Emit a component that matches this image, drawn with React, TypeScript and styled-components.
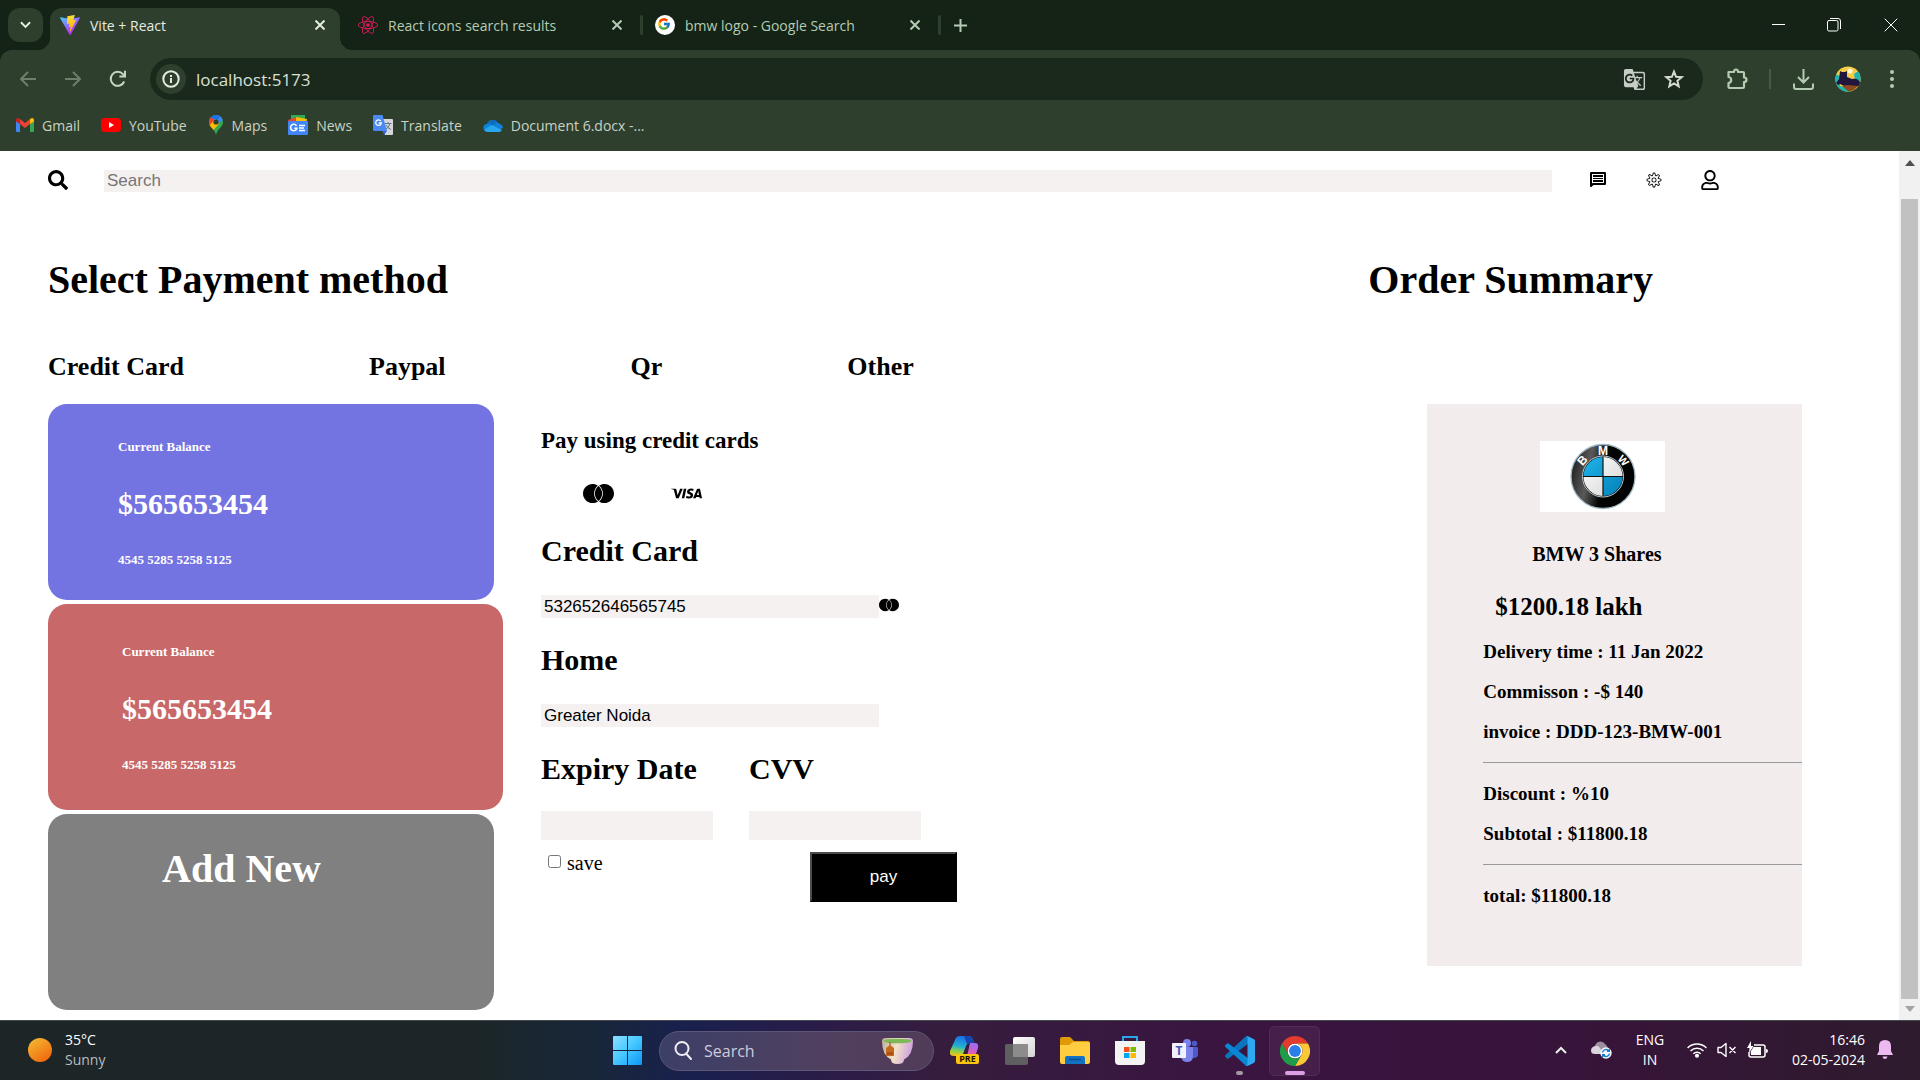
import React from "react";
import styled, { createGlobalStyle, css } from "styled-components";
import { FaSearch, FaRegUser, FaReact } from "react-icons/fa";
import { MdGTranslate } from "react-icons/md";
import { CiSettings } from "react-icons/ci";
import { FcGoogle } from "react-icons/fc";
import { SiMastercard, SiVisa } from "react-icons/si";

const GlobalStyle = createGlobalStyle`
  * { box-sizing: border-box; }
  body { margin: 0; background: #fff; }
  h1, h2, h3, h4, p { margin: 0; }
  button, input { font: inherit; color: inherit; }
  svg { display: block; flex: none; }
`;

const ui = css`
  font-family: "Open Sans", "Noto Sans", sans-serif;
`;

const Screen = styled.div`
  display: flex;
  flex-direction: column;
  height: 100vh;
  overflow: hidden;
`;

const IconButton = styled.button<{ $w?: number; $h?: number; $color?: string }>`
  display: flex;
  align-items: center;
  justify-content: center;
  flex: none;
  width: ${(p) => p.$w ?? 32}px;
  height: ${(p) => p.$h ?? 32}px;
  padding: 0;
  border: 0;
  background: none;
  color: ${(p) => p.$color ?? "#b5ccb3"};
`;

/* ---------- browser ---------- */

const TabStrip = styled.header`
  ${ui}
  display: flex;
  flex: none;
  height: 50px;
  padding: 8px 0 0 8px;
  background: #142316;
  font-size: 14px;
`;

const TabMenuButton = styled(IconButton)`
  margin-right: 7px;
  border-radius: 12px;
  background: #2f3f2e;
`;

const Tab = styled.div<{ $active?: boolean; $w: number; $inset?: number }>`
  position: relative;
  display: flex;
  align-items: center;
  width: ${(p) => p.$w}px;
  height: 42px;
  padding: 0 ${(p) => (p.$active ? 4 : 7)}px 8px ${(p) => p.$inset ?? 10}px;
  color: ${(p) => (p.$active ? "#e4ebe1" : "#b5ccb3")};
  ${(p) =>
    p.$active
      ? css`
          border-radius: 12px 12px 0 0;
          background: #2f3f2e;
          &::before,
          &::after {
            content: "";
            position: absolute;
            bottom: 0;
            width: 12px;
            height: 12px;
          }
          &::before {
            left: -12px;
            background: radial-gradient(circle at 0 0, transparent 12px, #2f3f2e 12px);
          }
          &::after {
            right: -12px;
            background: radial-gradient(circle at 100% 0, transparent 12px, #2f3f2e 12px);
          }
        `
      : ""}
`;

const TabTitle = styled.span`
  flex: 1;
  margin-left: 10px;
  white-space: nowrap;
`;

const TabDivider = styled.span`
  width: 3px;
  height: 20px;
  margin: 7px 0 0;
  border-radius: 2px;
  background: #2f3f2e;
`;

const WindowControls = styled.div`
  display: flex;
  margin-left: auto;
`;

const BrowserBars = styled.div`
  ${ui}
  flex: none;
  background: #142316;
`;

const Toolbar = styled.div`
  display: flex;
  align-items: center;
  height: 58px;
  padding: 0 6px 0 6px;
  border-radius: 12px 12px 0 0;
  background: #2f3f2e;
`;

const Omnibox = styled.div`
  display: flex;
  align-items: center;
  flex: 1;
  height: 42px;
  margin: 0 10px;
  padding: 0 9px 0 6px;
  border-radius: 21px;
  background: #1b291c;
`;

const SiteInfo = styled(IconButton)`
  border-radius: 50%;
  background: #2f3f2e;
`;

const UrlInput = styled.input`
  flex: 1;
  min-width: 0;
  margin-left: 10px;
  padding: 0;
  border: 0;
  outline: 0;
  background: none;
  color: #d9e0d6;
  font-size: 17px;
`;

const ToolbarDivider = styled.span`
  width: 2px;
  height: 20px;
  margin: 0 8px;
  background: #465a45;
`;

const Bookmarks = styled.nav`
  display: flex;
  align-items: center;
  height: 43px;
  padding: 0 16px 9px;
  background: #2f3f2e;
  gap: 21px;
`;

const Bookmark = styled.a`
  display: flex;
  align-items: center;
  gap: 8px;
  color: #c8d2c5;
  font-size: 14px;
  text-decoration: none;
  white-space: nowrap;
`;

/* ---------- web page ---------- */

const Viewport = styled.div`
  display: flex;
  flex: 1;
  min-height: 0;
  background: #fff;
`;

const Page = styled.main`
  flex: 1;
  min-width: 0;
  overflow: hidden;
  color: #000;
  font-family: "Liberation Serif", "Times New Roman", serif;
  font-size: 20px;
`;

const Scrollbar = styled.div`
  display: flex;
  flex: none;
  flex-direction: column;
  align-items: center;
  justify-content: space-between;
  width: 21px;
  padding: 9px 0 8px;
  background: #f1f1f1;
`;

const ScrollThumb = styled.div`
  flex: 1;
  width: 17px;
  margin: 33px 0 7px;
  background: #c1c1c1;
`;

const SearchRow = styled.div`
  display: flex;
  align-items: flex-start;
  gap: 36px;
  padding: 19px 179px 0 48px;
`;

const control = css`
  border: 0;
  border-radius: 0;
  outline: 0;
  background: #f5f1f1;
  font-family: "Liberation Sans", Arial, sans-serif;
  font-size: 17px;
`;

const SearchInput = styled.input`
  ${control}
  flex: 1;
  min-width: 0;
  height: 22px;
  padding: 0 3px;
  &::placeholder {
    color: #757575;
  }
`;

const Columns = styled.div`
  display: grid;
  grid-template-columns: 72% 28%;
  margin-top: 65px;
`;

const Payment = styled.section`
  padding-left: 48px;
`;

const Title = styled.h1`
  font-size: 40px;
  line-height: 46px;
`;

const Methods = styled.div`
  display: flex;
  gap: 185px;
  margin: 49px 0 22px;
`;

const Method = styled.button`
  padding: 0;
  border: 0;
  background: none;
  font-size: 26px;
  font-weight: bold;
  line-height: 30px;
`;

const PaymentBody = styled.div`
  display: flex;
  gap: 38px;
`;

const Cards = styled.div`
  display: flex;
  flex-direction: column;
  gap: 4px;
  width: 455px;
`;

const Card = styled.article<{ $bg: string; $large?: boolean }>`
  display: flex;
  flex-direction: column;
  gap: 31px;
  width: ${(p) => (p.$large ? 455 : 446)}px;
  height: ${(p) => (p.$large ? 206 : 196)}px;
  padding: ${(p) => (p.$large ? "40px 74px" : "35px 70px")};
  border-radius: 19px;
  background: ${(p) => p.$bg};
  color: #fff;
  font-weight: bold;
`;

const CardNote = styled.p`
  font-size: 13px;
  line-height: 16px;
`;

const CardAmount = styled.p`
  font-size: 30px;
  line-height: 35px;
`;

const AddCard = styled.button`
  display: flex;
  align-items: flex-start;
  width: 446px;
  height: 196px;
  padding: 32px 114px;
  border: 0;
  border-radius: 19px;
  background: #808080;
  color: #fff;
  font-size: 40px;
  font-weight: bold;
  line-height: 46px;
`;

const Form = styled.form`
  padding-top: 23px;
`;

const FormTitle = styled.h3`
  font-size: 23px;
  line-height: 28px;
`;

const Brands = styled.div`
  display: flex;
  gap: 57px;
  padding: 23px 42px 0;
`;

const FieldLabel = styled.label<{ $short?: boolean }>`
  display: block;
  margin: 25px 0 ${(p) => (p.$short ? 25 : 27)}px;
  font-size: 30px;
  font-weight: bold;
  line-height: 34px;
`;

const FieldInput = styled.input<{ $short?: boolean }>`
  ${control}
  display: block;
  width: ${(p) => (p.$short ? 172 : 338)}px;
  height: ${(p) => (p.$short ? 29 : 23)}px;
  padding: 0 3px;
`;

const InputRow = styled.div<{ $gap?: number }>`
  display: flex;
  align-items: flex-start;
  gap: ${(p) => p.$gap ?? 0}px;
`;

const Actions = styled.div`
  display: flex;
  align-items: flex-start;
  justify-content: space-between;
  width: 416px;
  padding: 12px 0 0 7px;
`;

const SaveLabel = styled.label`
  display: flex;
  align-items: flex-start;
  gap: 6px;
  line-height: 23px;
`;

const SaveBox = styled.input`
  width: 13px;
  height: 13px;
  margin: 3px 0 0;
`;

const PayButton = styled.button`
  width: 147px;
  height: 50px;
  border: 2px solid;
  border-color: #4c4c4c #000 #000 #4c4c4c;
  background: #000;
  color: #fff;
  font-family: "Liberation Sans", Arial, sans-serif;
  font-size: 17px;
`;

const Summary = styled.aside`
  min-width: 0;
  padding-left: 1px;
`;

const SummaryCard = styled.div`
  width: 375px;
  min-height: 562px;
  margin: 101px 0 0 59px;
  padding: 37px 0 0 56px;
  background: #f2ecec;
`;

const LogoFrame = styled.div`
  display: flex;
  align-items: center;
  justify-content: center;
  width: 125px;
  height: 71px;
  margin-left: 57px;
  background: #fff;
`;

const ShareName = styled.h4`
  margin: 30px 0 27px 49px;
  font-size: 20px;
  line-height: 24px;
`;

const Price = styled.h3`
  margin: 0 0 20px 12px;
  font-size: 25px;
  line-height: 28px;
`;

const Lines = styled.div`
  display: flex;
  flex-direction: column;
  gap: 18px;
`;

const Line = styled.p`
  font-size: 19px;
  font-weight: bold;
  line-height: 22px;
`;

const Rule = styled.hr`
  width: 100%;
  height: 2px;
  margin: 1px 0;
  border: 0;
  border-top: 1px solid #9a9a9a;
`;

/* ---------- taskbar ---------- */

const Taskbar = styled.footer`
  ${ui}
  display: grid;
  grid-template-columns: 1fr auto 1fr;
  align-items: center;
  flex: none;
  height: 60px;
  border-top: 1px solid #454a50;
  background: linear-gradient(90deg, #1d2527 0%, #1c2629 25%, #18263a 31%, #19204e 36%, #2b1c48 43%, #361d3e 49%, #391540 64%, #37143a 82%, #2e1b2d 100%);
  color: #fff;
  font-size: 14px;
  line-height: 20px;
`;

const Weather = styled.div`
  display: flex;
  align-items: center;
  gap: 13px;
  padding: 0 0 1px 28px;
`;

const Muted = styled.div`
  color: #b9bcbe;
`;

const Apps = styled.div`
  display: flex;
  align-items: center;
  padding-left: 2px;
`;

const TaskSearch = styled.label`
  display: flex;
  align-items: center;
  width: 275px;
  height: 40px;
  margin: 0 3px 0 4px;
  padding: 0 20px 0 14px;
  border: 1px solid #5c5677;
  border-radius: 20px;
  background: linear-gradient(90deg, #3c3f68, #50405f 60%, #513b58);
`;

const TaskSearchInput = styled.input`
  flex: 1;
  min-width: 0;
  margin-left: 12px;
  padding: 0;
  border: 0;
  outline: 0;
  background: none;
  font-size: 16px;
  &::placeholder {
    color: #cfcbdc;
  }
`;

const AppButton = styled.button<{ $open?: boolean; $current?: boolean }>`
  position: relative;
  display: flex;
  align-items: center;
  justify-content: center;
  width: 51px;
  height: 50px;
  margin: 0 2px;
  padding: 0;
  border: 1px solid ${(p) => (p.$current ? "#512b55" : "transparent")};
  border-radius: 5px;
  background: ${(p) => (p.$current ? "#46204a" : "none")};
  &::after {
    content: "";
    position: absolute;
    bottom: 0;
    width: ${(p) => (p.$current ? 20 : p.$open ? 7 : 0)}px;
    height: 4px;
    border-radius: 2px;
    background: ${(p) => (p.$current ? "#dc9fe6" : "#a397a6")};
  }
`;

const Tray = styled.div`
  display: flex;
  align-items: center;
  justify-content: flex-end;
  padding: 0 27px 1px 0;
`;

const Language = styled.div`
  width: 62px;
  margin-right: 6px;
  text-align: center;
`;

const Status = styled.div`
  display: flex;
  align-items: center;
  gap: 10px;
  width: 80px;
`;

const Clock = styled.div`
  width: 98px;
  margin-right: 12px;
  text-align: right;
  white-space: nowrap;
`;

/* ---------- drawings ---------- */

const Cross = ({ size = 10, weight = 2 }: { size?: number; weight?: number }) => (
  <svg width={size} height={size} viewBox="0 0 10 10" stroke="currentColor" strokeWidth={(weight * 10) / size} fill="none">
    <path d="M.5.5l9 9M9.5.5l-9 9" />
  </svg>
);

const Chevron = ({ up }: { up?: boolean }) => (
  <svg width={up ? 14 : 11} height="8" viewBox="0 0 12 8" fill="none" stroke="#e8efe6" strokeWidth="2">
    <path d={up ? "M1 7l5-5 5 5" : "M1 1l5 5 5-5"} />
  </svg>
);

const ViteLogo = () => (
  <svg width="20" height="20" viewBox="0 0 256 257">
    <defs>
      <linearGradient id="viteA" x1="0" y1="0" x2=".6" y2=".8">
        <stop offset="0" stopColor="#41d1ff" />
        <stop offset="1" stopColor="#bd34fe" />
      </linearGradient>
      <linearGradient id="viteB" x1=".4" y1="0" x2=".5" y2="1">
        <stop offset="0" stopColor="#ffea83" />
        <stop offset=".1" stopColor="#ffdd35" />
        <stop offset="1" stopColor="#ffa800" />
      </linearGradient>
    </defs>
    <path fill="url(#viteA)" d="M255.153 37.938 134.897 252.976c-2.483 4.44-8.862 4.466-11.382.048L.875 37.958c-2.746-4.814 1.371-10.646 6.827-9.67l120.385 21.517a6.537 6.537 0 0 0 2.322-.004l117.867-21.483c5.438-.991 9.574 4.796 6.877 9.62Z" />
    <path fill="url(#viteB)" d="M185.432.063 96.44 17.501a3.268 3.268 0 0 0-2.634 3.014l-5.474 92.456a3.268 3.268 0 0 0 3.997 3.378l24.777-5.718c2.318-.535 4.413 1.507 3.936 3.838l-7.361 36.047c-.495 2.426 1.782 4.5 4.151 3.78l15.304-4.649c2.372-.72 4.652 1.36 4.15 3.788l-11.698 56.621c-.732 3.542 3.979 5.473 5.943 2.437l1.313-2.028 72.516-144.72c1.215-2.423-.88-5.186-3.54-4.672l-25.505 4.922c-2.396.462-4.435-1.77-3.759-4.114l16.646-57.705c.677-2.35-1.37-4.583-3.769-4.113Z" />
  </svg>
);

const GoogleMark = () => (
  <svg width="20" height="20" viewBox="0 0 20 20">
    <circle cx="10" cy="10" r="10" fill="#fff" />
    <FcGoogle x="2" y="2" width="16" height="16" />
  </svg>
);

const Arrow = ({ right }: { right?: boolean }) => (
  <svg width="16" height="16" viewBox="0 0 16 16" fill="none" stroke="#6d7f6b" strokeWidth="2">
    <path d={right ? "M0 8h14M8 1l7 7-7 7" : "M16 8H2M8 1L1 8l7 7"} />
  </svg>
);

const Reload = () => (
  <svg width="18" height="18" viewBox="0 0 18 18" fill="none" stroke="#c3d6c1" strokeWidth="2">
    <path d="M15.2 11.5A7 7 0 1 1 14 4.2l2 2" />
    <path d="M16 .8v5.6h-5.6" />
  </svg>
);

const Info = () => (
  <svg width="18" height="18" viewBox="0 0 18 18">
    <circle cx="9" cy="9" r="7.7" fill="none" stroke="#e4ebe1" strokeWidth="2" />
    <path d="M8 8h2v5H8zM8 5h2v2H8z" fill="#e4ebe1" />
  </svg>
);

const Star = () => (
  <svg width="20" height="20" viewBox="0 0 20 20" fill="none" stroke="currentColor" strokeWidth="2">
    <path d="M10 2.600l2.100 5.200 5.500.4-4.200 3.600 1.300 5.500L10 14.400l-4.700 2.900 1.300-5.500-4.200-3.600 5.500-.4z" />
  </svg>
);

const Puzzle = () => (
  <svg width="22" height="22" viewBox="0 0 22 22" fill="none" stroke="currentColor" strokeWidth="2.200" strokeLinejoin="round">
    <path d="M2.500 4H8q0-2.500 2-2.500T12 4h5q1 0 1 1v4.500q2.500 0 2.500 2.200T18 14v5q0 1-1 1H3.500q-1 0-1-1v-4q2.700-.3 2.700-3t-2.700-3z" />
  </svg>
);

const Download = () => (
  <svg width="21" height="21" viewBox="0 0 21 21" fill="none" stroke="#b5ccb3" strokeWidth="2">
    <path d="M10.500 0v13M5 8l5.500 5.500L16 8" />
    <path d="M1 14.500v3.500q0 2 2 2h15q2 0 2-2v-3.500" />
  </svg>
);

const Avatar = () => (
  <svg width="26" height="26" viewBox="0 0 26 26">
    <defs>
      <clipPath id="avatarClip">
        <circle cx="13" cy="13" r="12.600" />
      </clipPath>
    </defs>
    <g clipPath="url(#avatarClip)">
      <path fill="#f7cd45" d="M0 0h26v26H0z" />
      <path fill="#20b3b0" d="M0 8l5 2v10l8 2 4 4H0zM19 8l4-3 3 3v8l-6-2z" />
      <circle cx="15" cy="5" r="2.500" fill="#fff8d8" />
      <path fill="#23163d" d="M5 5l2 1h3l2-1v6l5 2c4-1 6 0 8 3v4l-8 1-8-1-4-2-2 1-2-2 3-4z" />
      <path fill="#8d4a20" d="M7 20l5-1 11 1-4 4-5 2z" />
      <path fill="#20b3b0" d="M2 20l6 1 4 5H5z" />
    </g>
  </svg>
);

const Dots = () => (
  <svg width="4" height="18" viewBox="0 0 4 18" fill="#b5ccb3">
    <circle cx="2" cy="2" r="2" />
    <circle cx="2" cy="9" r="2" />
    <circle cx="2" cy="16" r="2" />
  </svg>
);

const Gmail = () => (
  <svg width="18" height="14" viewBox="0 0 18 14">
    <path fill="#4285f4" d="M0 2v11q0 1 1 1h3V6z" />
    <path fill="#34a853" d="M18 2v11q0 1-1 1h-3V6z" />
    <path fill="#ea4335" d="M4 6V1l5 4 5-4v5L9 10z" />
    <path fill="#c5221f" d="M0 2q0-2 2-2l2 1v5L0 3.500z" />
    <path fill="#fbbc04" d="M18 2q0-2-2-2l-2 1v5l4-2.500z" />
  </svg>
);

const Youtube = () => (
  <svg width="20" height="14" viewBox="0 0 20 14">
    <rect width="20" height="14" rx="4" fill="#f00" />
    <path fill="#fff" d="M8 4l5 3-5 3z" />
  </svg>
);

const Pin = () => (
  <svg width="16" height="20" viewBox="0 0 16 20">
    <defs>
      <clipPath id="pinClip">
        <path d="M8 0a7 7 0 0 1 7 7c0 4-3 5.500-5 8.500Q8.600 17.500 8 20q-.6-2.500-2-4.500C4 12.500 1 11 1 7a7 7 0 0 1 7-7z" />
      </clipPath>
    </defs>
    <g clipPath="url(#pinClip)">
      <path fill="#34a853" d="M0 0h16v20H0z" />
      <path fill="#4285f4" d="M6 0h10v5L8 9z" />
      <path fill="#1a73e8" d="M10 0H5L2 3l5 4 6-6z" />
      <path fill="#ea4335" d="M0 0l7 5.500L2 12H0z" />
      <path fill="#fbbc04" d="M1 11l6-7 4 5-6.500 7z" />
    </g>
    <circle cx="8" cy="7" r="2.600" fill="#2f3f2e" />
  </svg>
);

const News = () => (
  <svg width="20" height="20" viewBox="0 0 20 20">
    <path fill="#34a853" d="M3 0h14v6H3z" />
    <path fill="#ea4335" d="M0 5l9-3 3 5-10 3z" />
    <path fill="#fbbc04" d="M8 2l11 2-1 5-10-2z" />
    <rect y="6" width="20" height="14" rx="1" fill="#4285f4" />
    <path fill="none" stroke="#fff" strokeWidth="1.600" d="M8.500 10.800a3.200 3.200 0 1 0 .4 2.400H6.300M11 10.500h6M11 13h5M11 15.500h6" />
  </svg>
);

const Translate = () => (
  <svg width="20" height="20" viewBox="0 0 20 20">
    <path fill="#d5d7da" d="M7 4h12q1 0 1 1v14q0 1-1 1h-7z" />
    <path fill="none" stroke="#6b7780" d="M11.500 8.500h7M15 7v1.500M17 8.500q-1 4-4.500 6M13 10q1.500 3 5 4.500" />
    <path fill="#4a8af4" d="M1 0h8.500L14 16H1q-1 0-1-1V1q0-1 1-1z" />
    <path fill="#3367d6" d="M9.500 16H14l-3 4z" />
    <path fill="none" stroke="#fff" strokeWidth="1.300" d="M7.800 6A2.800 2.800 0 1 0 8.300 8H5.700" />
  </svg>
);

const CloudBlue = () => (
  <svg width="20" height="13" viewBox="0 0 20 13">
    <path fill="#0f6cbd" d="M4 5a6 6 0 0 1 11-1l-4 5-9 1z" />
    <path fill="#1180d8" d="M11 5q3-2.500 6 0 3 1 3 4l-5 2z" />
    <path fill="#0a84d8" d="M1 11Q-1 6 4 4.800q3-.8 5 1L11 9z" />
    <path fill="#2aa5ee" d="M1 11q2-2 6-4t6 1l6 3q-1 2-3 2H4.500Q2 13 1 11z" />
  </svg>
);

const ScrollArrow = ({ down }: { down?: boolean }) => (
  <svg width="10" height="6" viewBox="0 0 10 6">
    <path d={down ? "M0 0h10L5 6z" : "M0 6h10L5 0z"} fill={down ? "#a3a3a3" : "#505050"} />
  </svg>
);

const Message = () => (
  <svg width="20" height="20" viewBox="0 0 20 20">
    <path fill="none" stroke="#000" strokeWidth="2" strokeLinejoin="round" d="M3 16V3h14v11H5z" />
    <path fill="#000" d="M5 5h10v2H5zM5 8h10v1H5zM5 10h10v2H5z" />
  </svg>
);

const BmwLogo = () => (
  <svg width="66" height="67" viewBox="0 0 66 67" role="img" aria-label="BMW">
    <defs>
      <linearGradient id="bmwRing" x1="0" y1=".2" x2="1" y2=".4">
        <stop offset="0" stopColor="#1b1b1b" />
        <stop offset=".3" stopColor="#5a5a5a" />
        <stop offset=".55" stopColor="#050505" />
        <stop offset="1" stopColor="#000" />
      </linearGradient>
      <linearGradient id="bmwBlue" x1="0" y1="0" x2="1" y2="1">
        <stop offset="0" stopColor="#1fb4ea" />
        <stop offset="1" stopColor="#0480b8" />
      </linearGradient>
      <linearGradient id="bmwWhite" x1="0" y1="0" x2="1" y2="1">
        <stop offset="0" stopColor="#fff" />
        <stop offset="1" stopColor="#d4d4d4" />
      </linearGradient>
    </defs>
    <circle cx="33" cy="33.500" r="32" fill="url(#bmwRing)" stroke="#9fb8c4" strokeWidth="1.300" />
    <circle cx="33" cy="33.500" r="20.500" fill="#111" stroke="#b9c7cd" strokeWidth="1" />
    <path fill="url(#bmwBlue)" d="M32.400 32.900H13.500a19.500 19.500 0 0 1 18.900-18.900zM33.600 34.100h18.900A19.500 19.500 0 0 1 33.600 53z" />
    <path fill="url(#bmwWhite)" d="M33.600 32.900V14a19.500 19.500 0 0 1 18.900 18.900zM32.400 34.100V53a19.500 19.500 0 0 1-18.900-18.900z" />
    <g fill="#fff" fontFamily="Liberation Sans, Arial, sans-serif" fontWeight="bold" fontSize="12" textAnchor="middle">
      <text x="33" y="12">M</text>
      <text transform="translate(15.500 20) rotate(-48)">B</text>
      <text transform="translate(50.500 20) rotate(48)" fontSize="11">W</text>
    </g>
  </svg>
);

const Sun = () => (
  <svg width="24" height="24" viewBox="0 0 24 24">
    <defs>
      <linearGradient id="sun" x1=".1" y1="0" x2=".8" y2="1">
        <stop offset="0" stopColor="#f3bb32" />
        <stop offset="1" stopColor="#f1650c" />
      </linearGradient>
    </defs>
    <circle cx="12" cy="12" r="12" fill="url(#sun)" />
  </svg>
);

const WindowsLogo = () => (
  <svg width="29" height="29" viewBox="0 0 29 29">
    <defs>
      <linearGradient id="win" gradientUnits="userSpaceOnUse" x1="0" y1="0" x2="29" y2="29">
        <stop offset="0" stopColor="#8be0ff" />
        <stop offset=".5" stopColor="#45c8ff" />
        <stop offset="1" stopColor="#0a95f5" />
      </linearGradient>
    </defs>
    <path fill="url(#win)" d="M1 0h13v14H0V1q0-1 1-1zM15 0h13q1 0 1 1v13H15zM0 15h14v14H1q-1 0-1-1zM15 15h14v13q0 1-1 1H15z" />
  </svg>
);

const Lens = () => (
  <svg width="18" height="19" viewBox="0 0 18 19" fill="none" stroke="#f0eef5" strokeWidth="2">
    <circle cx="8" cy="7.500" r="6.500" />
    <path d="M12 12.500l5 5.500" strokeLinecap="round" />
  </svg>
);

const Cup = () => (
  <svg width="31" height="26" viewBox="0 0 31 26">
    <defs>
      <linearGradient id="cup" x1="0" y1="0" x2="1" y2=".2">
        <stop offset="0" stopColor="#bfae9a" />
        <stop offset=".5" stopColor="#f3e2c6" />
        <stop offset="1" stopColor="#cfa4dd" />
      </linearGradient>
    </defs>
    <path fill="url(#cup)" d="M0 3q0-3 4-3h23q4 0 4 3 0 14-9 18.500 0 4.500-6.500 4.500T9 21.500Q0 17 0 3z" />
    <ellipse cx="15.500" cy="3" rx="14" ry="2.300" fill="#7db956" />
    <path stroke="#8b3f22" strokeWidth="1" d="M8 4v6" />
    <path fill="#c46a20" d="M4 10l4-3 4 3v8H4z" />
    <path fill="#a95416" d="M5 14h6v3H5z" />
  </svg>
);

const Copilot = () => (
  <svg width="29" height="29" viewBox="0 0 29 29">
    <defs>
      <linearGradient id="copA" x1=".4" y1="0" x2=".2" y2="1">
        <stop offset="0" stopColor="#1a6fe8" />
        <stop offset=".5" stopColor="#22b0d0" />
        <stop offset=".75" stopColor="#8fd04a" />
        <stop offset="1" stopColor="#f5c318" />
      </linearGradient>
      <linearGradient id="copB" x1=".6" y1="0" x2=".3" y2="1">
        <stop offset="0" stopColor="#9f6cf2" />
        <stop offset=".5" stopColor="#e85bb0" />
        <stop offset="1" stopColor="#ff8a50" />
      </linearGradient>
    </defs>
    <path fill="url(#copA)" d="M10 0h9q3 0 4 4l1 3h-4q-3 0-4 3l-3 8q-1 2-4 2H4q-5 0-4-5L5 4q1-4 5-4z" />
    <path fill="url(#copB)" d="M20 7h5q4 0 3 5l-4 12q-1 4-5 4h-8q4-1 5-5l2-7z" />
    <path fill="#1646ae" d="M14 0h5q3 0 4 4l1 3h-4q-2 0-3 1z" />
    <rect x="6" y="18" width="23" height="10" rx="2" fill="#fbc60d" />
    <text x="17.500" y="26.200" fontSize="9" fontWeight="bold" textAnchor="middle" fill="#1b1300" fontFamily="Open Sans, sans-serif">PRE</text>
  </svg>
);

const TaskView = () => (
  <svg width="30" height="28" viewBox="0 0 30 28">
    <defs>
      <linearGradient id="tv" x1="0" y1="0" x2="1" y2="1">
        <stop offset="0" stopColor="#fff" />
        <stop offset="1" stopColor="#d4d4d4" />
      </linearGradient>
    </defs>
    <rect y="7" width="23" height="21" rx="2" fill="#5f5f61" />
    <rect x="8" width="22" height="20" rx="2" fill="url(#tv)" />
    <path fill="#8c8c8d" d="M8 7h15v13H9q-1 0-1-1z" />
  </svg>
);

const Explorer = () => (
  <svg width="30" height="27" viewBox="0 0 30 27">
    <path fill="#e09a06" d="M0 2q0-2 2-2h8l4 4h14q2 0 2 2v6H0z" />
    <path fill="#ffcd3f" d="M0 8h9l4-3h15q2 0 2 2v18q0 2-2 2H2q-2 0-2-2z" />
    <path fill="#1273c4" d="M5 27v-6q0-2 2-2h16q2 0 2 2v6z" />
    <path stroke="#0b4e8e" strokeWidth="1.500" d="M9 22.500h12" />
  </svg>
);

const Store = () => (
  <svg width="30" height="29" viewBox="0 0 30 29">
    <path fill="none" stroke="#2aa4ec" strokeWidth="2" d="M8 6V1h14v5" />
    <path fill="#f3f3f3" d="M0 5h30v20q0 4-4 4H4q-4 0-4-4z" />
    <path fill="#f25022" d="M9 11h5.500v5H9z" />
    <path fill="#7fba00" d="M15.500 11H21v5h-5.500z" />
    <path fill="#00a4ef" d="M9 17h5.500v5H9z" />
    <path fill="#ffb900" d="M15.500 17H21v5h-5.500z" />
  </svg>
);

const Teams = () => (
  <svg width="26" height="23" viewBox="0 0 26 23">
    <circle cx="15" cy="4" r="4" fill="#7b83eb" />
    <circle cx="22.500" cy="4.500" r="2.800" fill="#5059c9" />
    <path fill="#5059c9" d="M18 8h7q1 0 1 1v6q0 4-4 4-3 0-4-2z" />
    <path fill="#7b83eb" d="M9 8h12v9q0 6-6 6-5 0-6-5z" />
    <rect y="4" width="14" height="15" rx="1" fill="#f1f1fb" />
    <text x="7" y="16" fontSize="12" fontWeight="bold" textAnchor="middle" fill="#4b53bc" fontFamily="Open Sans, sans-serif">T</text>
  </svg>
);

const VsCode = () => (
  <svg width="30" height="30" viewBox="0 0 100 100">
    <path fill="#0a74bd" d="M96.461 10.796L75.857.876C73.472-.273 70.622.212 68.750 2.083L1.299 63.583c-1.815 1.654-1.813 4.511.004 6.162l5.510 5.009c1.485 1.350 3.722 1.450 5.321.236L93.361 13.370C96.086 11.303 100 13.246 100 16.667v-.24c0-2.400-1.375-4.589-3.539-5.631z" />
    <path fill="#0b86d4" d="M96.461 89.204l-20.604 9.920c-2.385 1.149-5.235.664-7.107-1.207L1.299 36.417c-1.815-1.654-1.813-4.511.004-6.162l5.510-5.009c1.485-1.350 3.722-1.450 5.321-.236L93.361 86.630C96.086 88.697 100 86.754 100 83.333v.24c0 2.400-1.375 4.589-3.539 5.631z" />
    <path fill="#2fa8f2" d="M75.858 99.126c-2.386 1.148-5.236.662-7.108-1.210C71.056 100.223 75 98.590 75 95.328V4.672c0-3.262-3.944-4.895-6.250-2.589 1.872-1.872 4.722-2.357 7.108-1.210l20.601 9.908C98.623 11.822 100 14.011 100 16.413v67.174c0 2.402-1.377 4.592-3.541 5.633z" />
  </svg>
);

const ChromeLogo = () => (
  <svg width="30" height="30" viewBox="0 0 48 48">
    <circle cx="24" cy="24" r="12" fill="#fff" />
    <path fill="#e33b2e" d="M24 12h20.781a23.994 23.994 0 0 0-41.564.003L13.608 30l.009-.002A11.985 11.985 0 0 1 24 12z" />
    <path fill="#fcc934" d="M34.391 30.003L24.001 48A23.994 23.994 0 0 0 44.780 12.003H23.999l-.003.009a11.985 11.985 0 0 1 10.395 17.991z" />
    <path fill="#1e9e49" d="M13.609 30.003L3.218 12.006A23.994 23.994 0 0 0 24.003 48l10.390-17.997-.007-.007a11.985 11.985 0 0 1-20.777.007z" />
    <circle cx="24" cy="24" r="9.500" fill="#2b7de9" />
  </svg>
);

const CloudSync = () => (
  <svg width="21" height="18" viewBox="0 0 21 18">
    <path fill="#9c8fa0" d="M4 5a5.500 5.500 0 0 1 10-2q3 2 3 6l-7 3z" />
    <path fill="#d9d3db" d="M0 9.500Q0 6 4 5q3-1 5 2l4 6H4Q0 13 0 9.500z" />
    <circle cx="15" cy="12" r="5.700" fill="#f4f8fc" />
    <path fill="none" stroke="#1378c8" strokeWidth="1.400" d="M11.500 11.500a3.500 3.500 0 0 1 6.300-1.500M18.500 12.500a3.500 3.500 0 0 1-6.300 1.500M18.300 8v2.300H16M11.700 16v-2.300H14" />
  </svg>
);

const Wifi = () => (
  <svg width="20" height="16" viewBox="0 0 20 16" fill="none" stroke="#fff" strokeWidth="1.500">
    <path d="M.6 6a13.200 13.200 0 0 1 18.800 0M3.500 9a9.200 9.200 0 0 1 13 0M6.300 11.800a5.200 5.200 0 0 1 7.400 0" />
    <circle cx="10" cy="13.800" r="1.300" fill="#fff" />
  </svg>
);

const Muffled = () => (
  <svg width="20" height="16" viewBox="0 0 20 16" fill="none" stroke="#fff" strokeWidth="1.400">
    <path d="M1 5.500h3L9 1.500v13l-5-4H1zM12.500 5l6 6M18.500 5l-6 6" strokeLinejoin="round" />
  </svg>
);

const Battery = () => (
  <svg width="21" height="18" viewBox="0 0 21 18">
    <path fill="none" stroke="#fff" strokeWidth="1.500" d="M7 4h9q2 0 2 2v8q0 2-2 2H4q-2 0-2-2v-3" />
    <path fill="#fff" d="M6.500 6H14v8H4l-.3-3.500zM19 8q2 0 2 2t-2 2zM4 0L0 7h2.500L2 12l4.500-7H4z" />
  </svg>
);

const Bell = () => (
  <svg width="16" height="20" viewBox="0 0 16 20" fill="#ecb9f0">
    <path d="M8 0q6 0 6 6v5l2 4H0l2-4V6q0-6 6-6zM5.500 16.500h5q-.5 2.500-2.500 2.500t-2.500-2.500z" />
  </svg>
);

/* ---------- data ---------- */

const cards = [
  { bg: "#7373e1", large: false },
  { bg: "#c86868", large: true },
];

const bookmarks: [string, React.ReactNode][] = [
  ["Gmail", <Gmail />],
  ["YouTube", <Youtube />],
  ["Maps", <Pin />],
  ["News", <News />],
  ["Translate", <Translate />],
  ["Document 6.docx -...", <CloudBlue />],
];

const apps: { name: string; icon: React.ReactNode; open?: boolean; current?: boolean }[] = [
  { name: "Copilot", icon: <Copilot /> },
  { name: "Task view", icon: <TaskView /> },
  { name: "File Explorer", icon: <Explorer /> },
  { name: "Store", icon: <Store /> },
  { name: "Teams", icon: <Teams /> },
  { name: "Code", icon: <VsCode />, open: true },
  { name: "Chrome", icon: <ChromeLogo />, current: true },
];

function Browser() {
  return (
    <>
      <TabStrip>
        <TabMenuButton $w={35} $h={34} aria-label="Search tabs">
          <Chevron />
        </TabMenuButton>
        <Tab $active $w={290}>
          <ViteLogo />
          <TabTitle>Vite + React</TabTitle>
          <IconButton $color="#e4ebe1" aria-label="Close tab"><Cross /></IconButton>
        </Tab>
        <Tab $w={300} $inset={18}>
          <FaReact size={20} color="#d81b5c" />
          <TabTitle>React icons search results</TabTitle>
          <IconButton aria-label="Close tab"><Cross /></IconButton>
        </Tab>
        <TabDivider />
        <Tab $w={295} $inset={12}>
          <GoogleMark />
          <TabTitle>bmw logo - Google Search</TabTitle>
          <IconButton aria-label="Close tab"><Cross /></IconButton>
        </Tab>
        <TabDivider />
        <IconButton $w={38} $h={34} aria-label="New tab">
          <svg width="13" height="13" viewBox="0 0 13 13" stroke="currentColor" strokeWidth="2">
            <path d="M6.500 0v13M0 6.500h13" />
          </svg>
        </IconButton>
        <WindowControls>
          <IconButton $w={56} $h={34} $color="#fff" aria-label="Minimize">
            <svg width="13" height="2" viewBox="0 0 13 2"><path fill="currentColor" d="M0 0h13v1H0z" /></svg>
          </IconButton>
          <IconButton $w={56} $h={34} $color="#fff" aria-label="Restore">
            <svg width="14" height="14" viewBox="0 0 14 14" fill="none" stroke="currentColor">
              <rect x=".5" y="2.500" width="10.500" height="10.500" rx="1.500" />
              <path d="M3 .5h8q2.500 0 2.500 2.500v8" />
            </svg>
          </IconButton>
          <IconButton $w={58} $h={34} $color="#fff" aria-label="Close">
            <Cross size={14} weight={1} />
          </IconButton>
        </WindowControls>
      </TabStrip>
      <BrowserBars>
        <Toolbar>
          <IconButton $w={44} aria-label="Back"><Arrow /></IconButton>
          <IconButton $w={45} aria-label="Forward"><Arrow right /></IconButton>
          <IconButton $w={45} aria-label="Reload"><Reload /></IconButton>
          <Omnibox>
            <SiteInfo $w={30} $h={30} aria-label="Site information"><Info /></SiteInfo>
            <UrlInput aria-label="Address" defaultValue="localhost:5173" />
            <IconButton $w={40} $color="#c6cdc4" aria-label="Translate this page"><MdGTranslate size={23} /></IconButton>
            <IconButton $w={40} $color="#d3dad0" aria-label="Bookmark"><Star /></IconButton>
          </Omnibox>
          <IconButton $w={48} aria-label="Extensions"><Puzzle /></IconButton>
          <ToolbarDivider />
          <IconButton $w={48} aria-label="Downloads"><Download /></IconButton>
          <IconButton $w={42} aria-label="Profile"><Avatar /></IconButton>
          <IconButton $w={45} aria-label="Menu"><Dots /></IconButton>
        </Toolbar>
        <Bookmarks>
          {bookmarks.map(([name, icon]) => (
            <Bookmark key={name} href="#">
              {icon}
              {name}
            </Bookmark>
          ))}
        </Bookmarks>
      </BrowserBars>
    </>
  );
}

function PaymentForm() {
  return (
    <Form onSubmit={(e) => e.preventDefault()}>
      <FormTitle>Pay using credit cards</FormTitle>
      <Brands>
        <SiMastercard size={31} />
        <SiVisa size={31} />
      </Brands>
      <FieldLabel htmlFor="card">Credit Card</FieldLabel>
      <InputRow>
        <FieldInput id="card" defaultValue="532652646565745" />
        <SiMastercard size={20} />
      </InputRow>
      <FieldLabel htmlFor="home">Home</FieldLabel>
      <FieldInput id="home" defaultValue="Greater Noida" />
      <InputRow $gap={36}>
        <div>
          <FieldLabel $short htmlFor="expiry">Expiry Date</FieldLabel>
          <FieldInput $short id="expiry" />
        </div>
        <div>
          <FieldLabel $short htmlFor="cvv">CVV</FieldLabel>
          <FieldInput $short id="cvv" />
        </div>
      </InputRow>
      <Actions>
        <SaveLabel>
          <SaveBox type="checkbox" />
          save
        </SaveLabel>
        <PayButton type="submit">pay</PayButton>
      </Actions>
    </Form>
  );
}

function OrderSummary() {
  return (
    <Summary>
      <Title>Order Summary</Title>
      <SummaryCard>
        <LogoFrame><BmwLogo /></LogoFrame>
        <ShareName>BMW 3 Shares</ShareName>
        <Price>$1200.18 lakh</Price>
        <Lines>
          <Line>Delivery time : 11 Jan 2022</Line>
          <Line>Commisson : -$ 140</Line>
          <Line>invoice : DDD-123-BMW-001</Line>
          <Rule />
          <Line>Discount : %10</Line>
          <Line>Subtotal : $11800.18</Line>
          <Rule />
          <Line>total: $11800.18</Line>
        </Lines>
      </SummaryCard>
    </Summary>
  );
}

export default function App() {
  return (
    <Screen>
      <GlobalStyle />
      <Browser />
      <Viewport>
        <Page>
          <SearchRow>
            <FaSearch size={20} />
            <SearchInput type="text" placeholder="Search" aria-label="Search" />
            <Message />
            <CiSettings size={20} />
            <FaRegUser size={20} />
          </SearchRow>
          <Columns>
            <Payment>
              <Title>Select Payment method</Title>
              <Methods>
                <Method>Credit Card</Method>
                <Method>Paypal</Method>
                <Method>Qr</Method>
                <Method>Other</Method>
              </Methods>
              <PaymentBody>
                <Cards>
                  {cards.map((card) => (
                    <Card key={card.bg} $bg={card.bg} $large={card.large}>
                      <CardNote>Current Balance</CardNote>
                      <CardAmount>$565653454</CardAmount>
                      <CardNote>4545 5285 5258 5125</CardNote>
                    </Card>
                  ))}
                  <AddCard>Add New</AddCard>
                </Cards>
                <PaymentForm />
              </PaymentBody>
            </Payment>
            <OrderSummary />
          </Columns>
        </Page>
        <Scrollbar>
          <ScrollArrow />
          <ScrollThumb />
          <ScrollArrow down />
        </Scrollbar>
      </Viewport>
      <Taskbar>
        <Weather>
          <Sun />
          <div>
            <div>35°C</div>
            <Muted>Sunny</Muted>
          </div>
        </Weather>
        <Apps>
          <IconButton $w={55} $h={50} aria-label="Start"><WindowsLogo /></IconButton>
          <TaskSearch>
            <Lens />
            <TaskSearchInput placeholder="Search" aria-label="Search the computer" />
            <Cup />
          </TaskSearch>
          {apps.map((app) => (
            <AppButton key={app.name} aria-label={app.name} $open={app.open} $current={app.current}>
              {app.icon}
            </AppButton>
          ))}
        </Apps>
        <Tray>
          <IconButton $w={44} aria-label="Hidden icons"><Chevron up /></IconButton>
          <IconButton $w={36} aria-label="OneDrive"><CloudSync /></IconButton>
          <Language>
            <div>ENG</div>
            <div>IN</div>
          </Language>
          <Status>
            <Wifi />
            <Muffled />
            <Battery />
          </Status>
          <Clock>
            <div>16:46</div>
            <div>02-05-2024</div>
          </Clock>
          <Bell />
        </Tray>
      </Taskbar>
    </Screen>
  );
}
